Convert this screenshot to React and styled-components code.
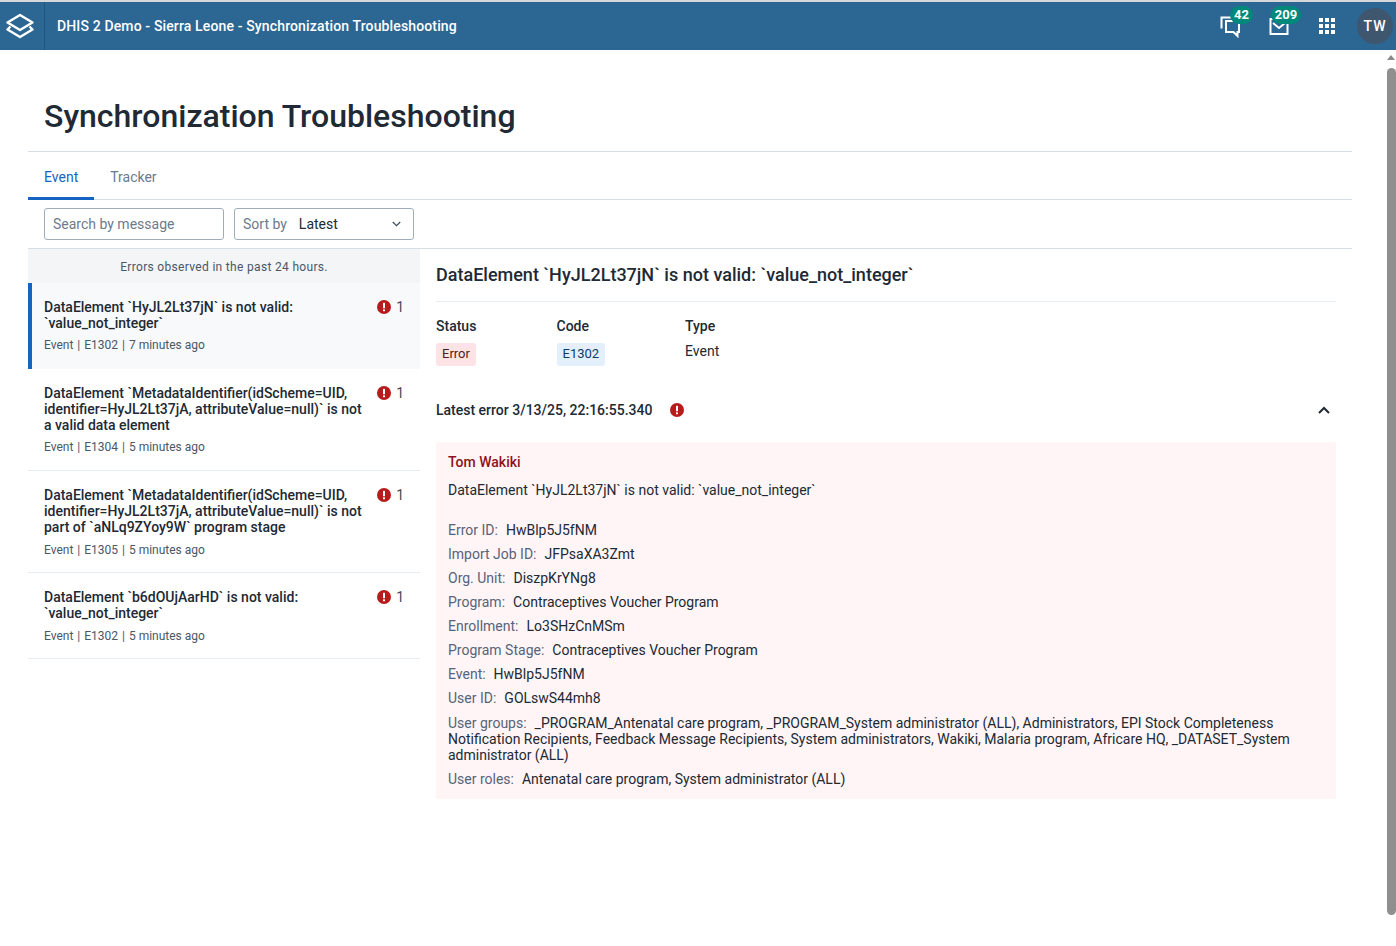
import React from "react";
import styled, { createGlobalStyle } from "styled-components";

const Global = createGlobalStyle`
  html, body { margin: 0; padding: 0; height: 100%; overflow: hidden; background: #fff; }
  body { font-family: Roboto, "Liberation Sans", sans-serif; color: #212934; }
  * { box-sizing: border-box; }
`;

const Page = styled.div`
  position: relative;
  height: 946px;
  padding-top: 2px;
  background: #fff;
  &::before { content: ""; position: absolute; top: 0; left: 0; right: 0; height: 2px; background: #d5d7da; }
`;
const Header = styled.header`
  height: 48px;
  background: #2c6693;
  display: flex;
  align-items: center;
  color: #fff;
`;
const LogoBox = styled.div`
  width: 45px;
  height: 48px;
  padding-right: 4px;
  display: flex;
  align-items: center;
  justify-content: center;
  border-right: 1px solid #20557f;
`;
const AppTitle = styled.div`
  margin-left: 12px;
  font-size: 14px;
  font-weight: 500;
  letter-spacing: 0.14px;
  flex: 1;
`;
const HeaderIcon = styled.div`
  position: absolute;
  top: 2px;
  left: ${(p) => p.$left}px;
  width: 36px;
  height: 48px;
  display: flex;
  align-items: center;
  justify-content: center;
`;
const Badge = styled.span`
  position: absolute;
  top: 4px;
  left: ${(p) => p.$left}px;
  width: ${(p) => p.$w}px;
  height: 18px;
  border-radius: 9px;
  background: #00897b;
  color: #fff;
  font-size: 13px;
  font-weight: 700;
  line-height: 18px;
  text-align: center;
`;
const Avatar = styled.div`
  position: absolute;
  top: 8px;
  left: 1357px;
  width: 36px;
  height: 36px;
  border-radius: 50%;
  background: #3f566f;
  color: #fff;
  font-size: 14px;
  font-weight: 500;
  letter-spacing: 1px;
  display: flex;
  align-items: center;
  justify-content: center;
`;
const ScrollArrow = styled.div`
  position: absolute;
  top: 55px;
  left: 1387px;
  width: 0;
  height: 0;
  border-left: 4px solid transparent;
  border-right: 4px solid transparent;
  border-bottom: 5px solid #8a8a8a;
`;
const ScrollThumb = styled.div`
  position: absolute;
  top: 68px;
  left: 1387px;
  width: 9px;
  height: 847px;
  background: #8f8f8f;
  border-radius: 5px;
`;
const Content = styled.main`
  margin: 0 44px 0 28px;
`;
const PageTitle = styled.h1`
  margin: 0;
  padding: 48px 16px 17px;
  height: 102px;
  font-size: 32px;
  line-height: 36px;
  font-weight: 500;
  color: #212934;
  border-bottom: 1px solid #d5dde5;
`;
const Tabs = styled.div`
  display: flex;
  height: 48px;
  border-bottom: 1px solid #d5dde5;
`;
const Tab = styled.div`
  padding: 0 16px;
  height: 48px;
  font-size: 14px;
  line-height: 50px;
  color: ${(p) => (p.$active ? "#1565c0" : "#6b7a8c")};
  border-bottom: ${(p) => (p.$active ? "3px solid #1565c0" : "0")};
`;
const Filters = styled.div`
  display: flex;
  gap: 10px;
  padding: 8px 16px;
  height: 49px;
  border-bottom: 1px solid #d5dde5;
`;
const FieldBox = styled.div`
  width: 180px;
  height: 32px;
  padding: 0 12px 0 8px;
  border: 1px solid #a0adba;
  border-radius: 3px;
  display: flex;
  align-items: center;
  font-size: 14px;
  color: #6e7a8a;
`;
const FieldValue = styled.span`
  margin-left: 12px;
  flex: 1;
  color: #212934;
`;
const Split = styled.div`
  display: flex;
`;
const Sidebar = styled.aside`
  width: 392px;
  flex: none;
`;
const Notice = styled.div`
  height: 34px;
  background: #f3f5f7;
  color: #4a5768;
  font-size: 12px;
  letter-spacing: 0.32px;
  line-height: 36px;
  text-align: center;
`;
const Item = styled.div`
  display: flex;
  justify-content: space-between;
  height: ${(p) => p.$h}px;
  padding: 16px 16px 0 ${(p) => (p.$active ? 12 : 16)}px;
  background: ${(p) => (p.$active ? "#f8f9fa" : "#fff")};
  border-left: ${(p) => (p.$active ? "4px solid #1565c0" : "0")};
  border-bottom: ${(p) => (p.$active ? "0" : "1px solid #e8edf2")};
`;
const ItemBody = styled.div`
  width: 320px;
`;
const ItemTitle = styled.div`
  font-size: 14px;
  font-weight: 500;
  line-height: 16px;
  color: #212934;
`;
const ItemMeta = styled.div`
  margin-top: ${(p) => p.$gap}px;
  font-size: 12px;
  line-height: 14px;
  color: #4a5768;
`;
const Sep = styled.span`
  margin: 0 1px;
`;
const Count = styled.div`
  display: flex;
  align-items: center;
  gap: 5px;
  height: 16px;
  font-size: 14px;
  color: #404b5a;
`;
const Detail = styled.section`
  flex: 1;
  padding: 0 16px;
`;
const DetailTitle = styled.h2`
  margin: 0;
  height: 53px;
  font-size: 18px;
  line-height: 52px;
  font-weight: 500;
  color: #212934;
  border-bottom: 1px solid #e8edf2;
`;
const Meta = styled.div`
  display: flex;
  margin-top: 16px;
`;
const MetaCol = styled.div`
  width: ${(p) => p.$w}px;
`;
const MetaLabel = styled.div`
  font-size: 14px;
  font-weight: 500;
  line-height: 16px;
  color: #212934;
`;
const Tag = styled.span`
  display: inline-block;
  margin-top: 9px;
  height: 23px;
  padding: 0 6px;
  border-radius: 3px;
  font-size: 13px;
  line-height: 22px;
  background: ${(p) => (p.$blue ? "#e3f0fb" : "#fde3e5")};
  color: ${(p) => (p.$blue ? "#0f3a68" : "#4f1a22")};
`;
const MetaText = styled.div`
  margin-top: 9px;
  font-size: 14px;
  line-height: 16px;
  color: #212934;
`;
const LatestRow = styled.div`
  display: flex;
  align-items: center;
  height: 16px;
  margin-top: 36px;
  padding-right: 6px;
  font-size: 14px;
  font-weight: 500;
  color: #212934;
`;
const LatestIcon = styled.span`
  margin-left: 18px;
  flex: 1;
  display: flex;
`;
const ErrorCard = styled.div`
  margin-top: 24px;
  padding: 12px;
  height: 357px;
  background: #fff5f6;
  border-radius: 2px;
  font-size: 14px;
  line-height: 16px;
`;
const Author = styled.div`
  font-weight: 500;
  color: #8f1120;
`;
const Message = styled.div`
  margin-top: 12px;
  margin-bottom: 24px;
  color: #212934;
`;
const Row = styled.div`
  margin-bottom: ${(p) => p.$gap}px;
  color: #212934;
`;
const Label = styled.span`
  color: #56637a;
  margin-right: 8px;
`;

const Logo = () => (
  <svg width="30" height="26" viewBox="0 0 30 26" fill="none" stroke="#fff" strokeWidth="2.4" strokeLinejoin="round">
    <path d="M15 2 27.5 9.5 15 17 2.5 9.5Z" />
    <path d="M5.5 13.5 2.5 16.5 15 24 27.5 16.5 24.5 13.5" />
  </svg>
);
const Chat = () => (
  <svg width="24" height="24" viewBox="0 0 24 24" fill="none" stroke="#fff" strokeWidth="2" strokeLinejoin="miter">
    <path d="M7 7H20V18H18.5V22L14.5 18H7Z" />
    <path d="M2.5 14.5V3.5H15" />
  </svg>
);
const Mail = () => (
  <svg width="24" height="24" viewBox="0 0 24 24" fill="none" stroke="#fff" strokeWidth="2">
    <path d="M7 5H3.5V20H20.5V5H17" />
    <path d="M6 9 12 14 18 9" />
  </svg>
);
const Grid = () => (
  <svg width="18" height="18" viewBox="0 0 18 18" fill="#fff">
    {[1, 7, 13].flatMap((y) =>
      [1, 7, 13].map((x) => <rect key={`${x}-${y}`} x={x} y={y} width="4" height="4" />)
    )}
  </svg>
);
const Alert = () => (
  <svg width="14" height="14" viewBox="0 0 14 14">
    <circle cx="7" cy="7" r="7" fill="#b71c1c" />
    <rect x="6" y="2.8" width="2" height="5.4" rx="0.5" fill="#fff" />
    <rect x="6" y="9.2" width="2" height="2" rx="0.5" fill="#fff" />
  </svg>
);
const ChevronDown = () => (
  <svg width="9" height="6" viewBox="0 0 9 6" fill="none" stroke="#404b5a" strokeWidth="1.2">
    <path d="M0.8 1 4.5 4.7 8.2 1" />
  </svg>
);
const ChevronUp = () => (
  <svg width="12" height="8" viewBox="0 0 12 8" fill="none" stroke="#212934" strokeWidth="2">
    <path d="M1 7 6 2 11 7" />
  </svg>
);

const items = [
  { h: 86, gap: 7, active: true, title: ["DataElement `HyJL2Lt37jN` is not valid:", "`value_not_integer`"], code: "E1302", age: "7 minutes ago" },
  { h: 102, gap: 7, title: ["DataElement `MetadataIdentifier(idScheme=UID,", "identifier=HyJL2Lt37jA, attributeValue=null)` is not", "a valid data element"], code: "E1304", age: "5 minutes ago" },
  { h: 102, gap: 8, title: ["DataElement `MetadataIdentifier(idScheme=UID,", "identifier=HyJL2Lt37jA, attributeValue=null)` is not", "part of `aNLq9ZYoy9W` program stage"], code: "E1305", age: "5 minutes ago" },
  { h: 86, gap: 8, title: ["DataElement `b6dOUjAarHD` is not valid:", "`value_not_integer`"], code: "E1302", age: "5 minutes ago" },
];

const fields = [
  ["Error ID:", "HwBlp5J5fNM", 8],
  ["Import Job ID:", "JFPsaXA3Zmt", 8],
  ["Org. Unit:", "DiszpKrYNg8", 8],
  ["Program:", "Contraceptives Voucher Program", 8],
  ["Enrollment:", "Lo3SHzCnMSm", 8],
  ["Program Stage:", "Contraceptives Voucher Program", 8],
  ["Event:", "HwBlp5J5fNM", 8],
  ["User ID:", "GOLswS44mh8", 9],
  ["User groups:", "_PROGRAM_Antenatal care program, _PROGRAM_System administrator (ALL), Administrators, EPI Stock Completeness Notification Recipients, Feedback Message Recipients, System administrators, Wakiki, Malaria program, Africare HQ, _DATASET_System administrator (ALL)", 8],
  ["User roles:", "Antenatal care program, System administrator (ALL)", 0],
];

export default function App() {
  return (
    <Page>
      <Global />
      <Header>
        <LogoBox><Logo /></LogoBox>
        <AppTitle>DHIS 2 Demo - Sierra Leone - Synchronization Troubleshooting</AppTitle>
        <HeaderIcon $left={1213}><Chat /><Badge $left={17} $w={23}>42</Badge></HeaderIcon>
        <HeaderIcon $left={1261}><Mail /><Badge $left={10} $w={30}>209</Badge></HeaderIcon>
        <HeaderIcon $left={1309}><Grid /></HeaderIcon>
        <Avatar>TW</Avatar>
      </Header>
      <ScrollArrow />
      <ScrollThumb />
      <Content>
        <PageTitle>Synchronization Troubleshooting</PageTitle>
        <Tabs>
          <Tab $active>Event</Tab>
          <Tab>Tracker</Tab>
        </Tabs>
        <Filters>
          <FieldBox>Search by message</FieldBox>
          <FieldBox>Sort by<FieldValue>Latest</FieldValue><ChevronDown /></FieldBox>
        </Filters>
        <Split>
          <Sidebar>
            <Notice>Errors observed in the past 24 hours.</Notice>
            {items.map((it) => (
              <Item key={it.code + it.age + it.title[2]} $h={it.h} $active={it.active}>
                <ItemBody>
                  <ItemTitle>{it.title.map((l) => <div key={l}>{l}</div>)}</ItemTitle>
                  <ItemMeta $gap={it.gap}>Event <Sep>|</Sep> {it.code} <Sep>|</Sep> {it.age}</ItemMeta>
                </ItemBody>
                <Count><Alert />1</Count>
              </Item>
            ))}
          </Sidebar>
          <Detail>
            <DetailTitle>DataElement `HyJL2Lt37jN` is not valid: `value_not_integer`</DetailTitle>
            <Meta>
              <MetaCol $w={120.5}><MetaLabel>Status</MetaLabel><Tag>Error</Tag></MetaCol>
              <MetaCol $w={128.5}><MetaLabel>Code</MetaLabel><Tag $blue>E1302</Tag></MetaCol>
              <MetaCol $w={100}><MetaLabel>Type</MetaLabel><MetaText>Event</MetaText></MetaCol>
            </Meta>
            <LatestRow>
              Latest error 3/13/25, 22:16:55.340
              <LatestIcon><Alert /></LatestIcon>
              <ChevronUp />
            </LatestRow>
            <ErrorCard>
              <Author>Tom Wakiki</Author>
              <Message>DataElement `HyJL2Lt37jN` is not valid: `value_not_integer`</Message>
              {fields.map(([k, v, gap]) => (
                <Row key={k} $gap={gap}><Label>{k}</Label>{v}</Row>
              ))}
            </ErrorCard>
          </Detail>
        </Split>
      </Content>
    </Page>
  );
}
